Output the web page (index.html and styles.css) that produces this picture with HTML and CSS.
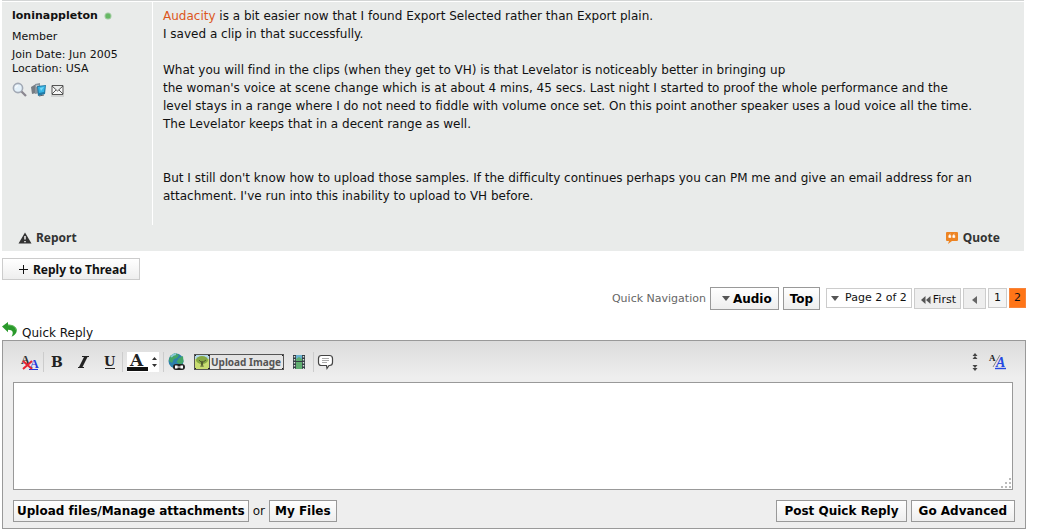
FILE: index.html
```html
<!DOCTYPE html>
<html lang="en">
<head>
<meta charset="utf-8">
<title>Quick Reply</title>
<link rel="stylesheet" href="styles.css">
</head>
<body>
<main class="page">
  <article class="post">
    <div class="post-main">
      <aside class="user">
        <div class="user-name"><a href="#">loninappleton</a>
          <svg width="8" height="8" viewBox="0 0 8 8"><circle cx="4" cy="4" r="3.5" fill="#a0cba0"/><circle cx="4" cy="4" r="2.500" fill="#66b864"/></svg>
        </div>
        <div class="user-title">Member</div>
        <div class="user-stat">Join Date: Jun 2005</div>
        <div class="user-stat">Location: USA</div>
        <div class="user-links">
          <a href="#" aria-label="Find posts"><svg width="16" height="16" viewBox="0 0 16 16"><circle cx="6" cy="6" r="4.6" fill="#e4f1fa" stroke="#a2a9b5" stroke-width="1.6"/><path d="M3.5 6A3 3 0 0 1 6 3.5" fill="none" stroke="#fff"/><path d="M9.5 9.500L14 14" stroke="#8b8790" stroke-width="2.3"/></svg></a>
          <a href="#" aria-label="Contact"><svg width="16" height="16" viewBox="0 0 16 16"><path d="M0 5l5-3v9l-4 1z" fill="#777d84"/><path d="M4 2l5-1v10l-5 1z" fill="#8c969e"/><path d="M5 3h3v2H5z" fill="#b9c3ca"/><path d="M6 4l9-1-1 9-7 2z" fill="#237ba6"/><path d="M7 5l7-1-1 6-5 1z" fill="#35b5e6"/><path d="M9 6l4-1-3 4z" fill="#77d8f6"/><path d="M8 14l5-1" stroke="#596773"/></svg></a>
          <a href="#" aria-label="Private message"><svg width="16" height="16" viewBox="0 0 16 16"><path d="M2 3.500h11v9H2zM2 4l5.500 5L13 4M2 12l4-4M13 12L9 8" fill="#f7f7f7" stroke="#555"/><path d="M1 14h13" stroke="#bbb"/></svg></a>
        </div>
      </aside>
      <div class="message"><a href="#">Audacity</a> is a bit easier now that I found Export Selected rather than Export plain.<br>
I saved a clip in that successfully.<br><br>
What you will find in the clips (when they get to VH) is that Levelator is noticeably better in bringing up<br>
the woman's voice at scene change which is at about 4 mins, 45 secs. Last night I started to proof the whole performance and the<br>
level stays in a range where I do not need to fiddle with volume once set. On this point another speaker uses a loud voice all the time.<br>
The Levelator keeps that in a decent range as well.<br><br><br>
But I still don't know how to upload those samples. If the difficulty continues perhaps you can PM me and give an email address for an<br>
attachment. I've run into this inability to upload to VH before.</div>
    </div>
    <footer class="post-foot">
      <a href="#"><svg width="14" height="12" viewBox="0 0 14 12"><path d="M7 .5L13.500 11.500H.5z" fill="#333"/><path d="M7 4v3.500M7 9v1.200" stroke="#fff" stroke-width="1.400"/></svg>Report</a>
      <a href="#"><svg width="14" height="14" viewBox="0 0 14 14"><path d="M2 1h10q1 0 1 1v7q0 1-1 1H7l-4 3 1-3H2q-1 0-1-1V2q0-1 1-1z" fill="#ed8423"/><path d="M5.500 3L3.800 4.500v2h2v-2H4.600M9.500 3L7.800 4.500v2h2v-2H8.600" fill="#fff" stroke="#fff" stroke-width=".6"/></svg>Quote</a>
    </footer>
  </article>

  <a class="reply-link" href="#"><svg width="10" height="11" viewBox="0 0 10 11"><path d="M4.500 0v9M0 4.500h9" stroke="#111" stroke-width="1"/></svg>Reply to Thread</a>

  <nav class="nav">
    <span class="nav-label">Quick Navigation</span>
    <button class="btn btn-nav btn-audio" type="button"><svg width="8" height="5" viewBox="0 0 8 5"><path d="M0 0h8L4 5z" fill="#555"/></svg>Audio</button>
    <button class="btn btn-nav" type="button">Top</button>
    <div class="pages">
      <button class="page-menu" type="button"><svg width="8" height="5" viewBox="0 0 8 5"><path d="M0 0h8L4 5z" fill="#555"/></svg>Page 2 of 2</button>
      <a class="page-step" href="#"><svg width="10" height="8" viewBox="0 0 10 8"><path d="M4.500 0v8L0 4zM9.500 0v8L5 4z" fill="#555"/></svg>First</a>
      <a class="page-step page-prev" href="#" aria-label="Previous page"><svg width="5" height="8" viewBox="0 0 5 8"><path d="M5 0v8L0 4z" fill="#666"/></svg></a>
      <a class="page-num" href="#">1</a>
      <a class="page-num page-current" href="#" aria-current="page">2</a>
    </div>
  </nav>

  <h2 class="reply-title"><svg width="16" height="16" viewBox="0 0 16 16"><path d="M0 4.500L6 0v2.700c6 0 10 3.300 8.500 7.300-.6 1.700-2 3.400-5 4.700 2.300-3.700 1.800-7-3.500-7v2.600z" fill="#2a9a2b"/><path d="M6 3c5 0 8 2 8 5" fill="none" stroke="#67bc60"/></svg><label for="reply">Quick Reply</label></h2>
  <form class="editor">
    <div class="toolbar">
      <button class="tool" type="button" aria-label="Remove text formatting"><svg width="18" height="18" viewBox="0 0 18 18"><text class="glyph" x="0" y="11" font-size="12" fill="#333">A</text><text class="glyph" x="9" y="15" font-size="12" fill="#2439dc">A</text><path d="M8 16.500h9" stroke="#2439dc"/><path d="M2 8l9 8M11 8l-9 8" stroke="#e62431" stroke-width="2"/></svg></button>
      <i class="sep"></i>
      <button class="tool tool-style" type="button" aria-label="Bold"><svg width="16" height="16" viewBox="0 0 16 16"><text class="glyph heavy" x="3" y="13" font-size="14">B</text></svg></button>
      <button class="tool tool-style" type="button" aria-label="Italic"><svg width="16" height="16" viewBox="0 0 16 16"><path d="M7 2.500h7M3 13.500h6" stroke="#222" stroke-width="1"/><path d="M9 3h3.500L7.500 13H4z" fill="#222"/></svg></button>
      <button class="tool" type="button" aria-label="Underline"><svg width="16" height="16" viewBox="0 0 16 16"><text class="glyph heavy" x="2" y="12" font-size="13">U</text><path d="M3 14.500h10" stroke="#222"/></svg></button>
      <i class="sep"></i>
      <button class="tool tool-color" type="button" aria-label="Font colour"><svg width="32" height="20" viewBox="0 0 32 20"><text class="glyph wide" x="3" y="14" font-size="17">A</text><path d="M0 17h21" stroke="#111" stroke-width="4"/><path d="M25 8l2.500-3L30 8zM25 12l2.500 3L30 12z" fill="#333"/></svg></button>
      <i class="sep"></i>
      <button class="tool tool-link" type="button" aria-label="Link"><svg width="18" height="18" viewBox="0 0 18 18"><circle cx="8" cy="8" r="7.500" fill="#2c80ac"/><path d="M2 3l5-3 4 2-2 3-3 1-2 4-3-2zM11 5l4-2 .5 6-3 3-4-3z" fill="#43a567"/><path d="M3 4a7 7 0 0 1 5-3" fill="none" stroke="#8bc8d8" stroke-width="2"/><rect x="5" y="11" width="12" height="6" rx="3" fill="#222"/><path d="M7 12.500h2.500v3H7zM12.500 12.500H15v3h-2.500z" fill="#fff"/><path d="M9 14h4" stroke="#fff"/></svg></button>
      <button class="tool upload-image" type="button"><svg width="16" height="16" viewBox="0 0 16 16"><path d="M0 0h16v16H0z" fill="#c9dd72"/><path d="M1 1h14v4H1z" fill="#b5d9e8"/><ellipse cx="8" cy="6" rx="6" ry="4" fill="#85a844"/><path d="M7 13l1-6 1 6M8 9L5 6M8 9l4-3" stroke="#50592e" fill="none"/><path d="M15.500 0v16" stroke="#555"/><path d="M0 0h2v2H0zM14 0h2v2h-2zM0 14h2v2H0zM14 14h2v2h-2z" fill="#222"/></svg><span>Upload Image</span><svg width="2" height="16" viewBox="0 0 2 16"><path d="M0 0h2v2H0zM0 14h2v2H0z" fill="#222"/></svg></button>
      <button class="tool tool-video" type="button" aria-label="Video"><svg width="14" height="16" viewBox="0 0 14 16"><path d="M1 1h12v14H1z" fill="#333d44"/><path d="M4 1h6v6H4z" fill="#69b1cf"/><path d="M4 5l3-2 3 2v2H4zM4 8h6v7H4z" fill="#5fae70"/><path d="M2.500 2v13M11.500 2v13" stroke="#dbe4e1" stroke-width="1.400" stroke-dasharray="1.500 1.500"/></svg></button>
      <i class="sep"></i>
      <button class="tool" type="button" aria-label="Quote"><svg width="16" height="16" viewBox="0 0 16 16"><path d="M3.500 1.500h8q3 0 3 3v4q0 3-3 3H11l-2 3-.5-3h-5q-3 0-3-3v-4q0-3 3-3z" fill="#fff" stroke="#444" stroke-width="1.200"/><path d="M4 4.500h7M4 6.500h7M4 8.500h5" stroke="#aaa"/></svg></button>
      <span class="spacer"></span>
      <button class="tool tool-resize" type="button" aria-label="Resize editor"><svg width="8" height="20" viewBox="0 0 8 20"><path d="M1.500 4L4 1l2.500 3zM1.500 7L4 4l2.500 3zM1.500 13h5L4 16zM1.500 16h5L4 19z" fill="#444"/></svg></button>
      <button class="tool" type="button" aria-label="Switch editor mode"><svg width="18" height="18" viewBox="0 0 18 18"><text class="glyph" x="0" y="8" font-size="9" fill="#222">A</text><path d="M4 14L11 2" stroke="#888"/><text class="glyph italic" x="7" y="14" font-size="14" fill="#2448e2">A</text><path d="M6 15.500h11" stroke="#2448e2" stroke-width="1.400"/></svg></button>
    </div>
    <div class="text-wrap">
      <textarea id="reply"></textarea>
      <svg class="grip" width="12" height="12" viewBox="0 0 12 12"><path d="M9 1h2v2H9zM5 5h2v2H5zM9 5h2v2H9zM1 9h2v2H1zM5 9h2v2H5zM9 9h2v2H9z" fill="#bbb"/></svg>
    </div>
    <div class="actions">
      <button class="btn btn-file" type="button">Upload files/Manage attachments</button>
      <span>or</span>
      <button class="btn" type="button">My Files</button>
      <span class="spacer"></span>
      <button class="btn btn-submit" type="submit">Post Quick Reply</button>
      <button class="btn btn-submit" type="button">Go Advanced</button>
    </div>
  </form>
</main>
</body>
</html>
```
FILE: styles.css
```css
* { box-sizing: border-box; }
body {
  margin: 0;
  background: #fff;
  color: #111;
  font: 12px/18px "DejaVu Sans", Verdana, sans-serif;
  font-variant-ligatures: none;
}
a { color: inherit; text-decoration: none; }
svg { display: block; flex: none; overflow: visible; }
button { margin: 0; color: inherit; font: inherit; white-space: nowrap; }
.page { padding: 0 14px 0 2px; }

.post {
  margin-right: 2px;
  border-top: 1px solid #d3d5d5;
  background: #e9ebea;
}
.post-main { display: flex; border-top: 1px solid #fff; }
.user {
  flex: none;
  width: 151px;
  padding: 5px 10px;
  border-right: 1px solid #fff;
}
.user-name { display: flex; align-items: center; gap: 6px; font-weight: bold; font-size: 11px; }
.user-title { margin-top: 3px; font-size: 11px; }
.user-stat { font-size: 11px; line-height: 14px; }
.user-title + .user-stat { margin-top: 2px; }
.user-links { display: flex; gap: 3px; margin-top: 6px; }
.message { padding: 5px 10px 20px; }
.message a { color: #dc571c; }
.post-foot {
  display: flex;
  justify-content: space-between;
  padding: 4px 24px 4px 16px;
  font: bold 12px/18px "Noto Sans", sans-serif;
  color: #333;
}
.post-foot a { display: flex; align-items: center; gap: 4px; }

.reply-link {
  display: inline-flex;
  align-items: center;
  gap: 4px;
  margin-top: 7px;
  padding: 2px 12px 0 16px;
  border: 1px solid #ccc;
  background: linear-gradient(#fff, #eee);
  font: bold 12px/18px "Noto Sans", sans-serif;
  vertical-align: top;
}

.nav { display: flex; justify-content: flex-end; align-items: center; gap: 4px; margin-top: 7px; }
.nav-label { color: #666; font-size: 11px; }
.btn {
  height: 22px;
  padding: 0 5px;
  border: 1px solid #999;
  background: linear-gradient(#fff, #eee);
  color: #000;
  font-weight: bold;
}
.btn-nav { height: 23px; padding: 0 6px; }
.btn-audio { display: flex; align-items: center; gap: 3px; padding: 0 6px 0 11px; }
.pages { display: flex; gap: 2px; margin-left: 2px; font-size: 11px; }
.pages > * {
  display: flex;
  align-items: center;
  height: 20px;
  border: 1px solid #ccc;
  background: #fff;
}
.page-menu { gap: 6px; padding: 0 4px; }
.pages .page-step { gap: 2px; height: 21px; padding: 3px 4px 0 6px; background: #eee; }
.pages .page-prev { padding: 2px 8px 0; }
.pages .page-num { padding: 0 5px; background: #f4f4f4; }
.pages .page-current { padding: 0 4px; border-color: #f8843a; background: #ff7517; }

.reply-title {
  display: flex;
  align-items: center;
  gap: 4px;
  margin: 12px 0 0;
  font-weight: normal;
  font-size: 12px;
  line-height: 18px;
}
.reply-title label { padding-top: 4px; line-height: 14px; }
.reply-title svg { align-self: flex-start; }
.editor {
  padding: 8px 12px 6px 10px;
  border: 1px solid #999;
  background: linear-gradient(#dcdcdc, #eee 36px);
}
.toolbar { display: flex; align-items: center; height: 26px; padding: 0 6px 0 8px; }
.tool { display: flex; align-items: center; padding: 0; border: 0; background: none; }
.sep { width: 1px; height: 20px; margin: 0 4px; background: #ccc; }
.tool-style { width: 27px; }
.tool-color { background: #fff; }
.tool-link { margin-right: 8px; }
.glyph { font-family: "Liberation Serif", serif; font-weight: bold; }
.italic { font-style: italic; }
.heavy, .wide { fill: #222; font-family: "DejaVu Serif", serif; }
.upload-image {
  outline: 1px solid #555;
  outline-offset: -1px;
  color: #555;
  font: bold 10px/16px "Noto Sans", sans-serif;
}
.upload-image span { padding: 0 1px; }
.tool-video { margin: 0 3px 0 8px; }
.tool-resize { margin-right: 10px; }
.spacer { flex: 1; }
.text-wrap { position: relative; margin-top: 7px; }
textarea {
  display: block;
  width: 100%;
  height: 108px;
  padding: 4px;
  border: 1px solid #999;
  background: #fff;
  font: inherit;
  resize: none;
}
.grip { position: absolute; right: 1px; bottom: 1px; }
.actions { display: flex; align-items: center; gap: 4px; margin: 10px -2px 0 0; }
.btn-file { padding: 0 3px; }
.btn-submit { padding: 0 7px; }
```
